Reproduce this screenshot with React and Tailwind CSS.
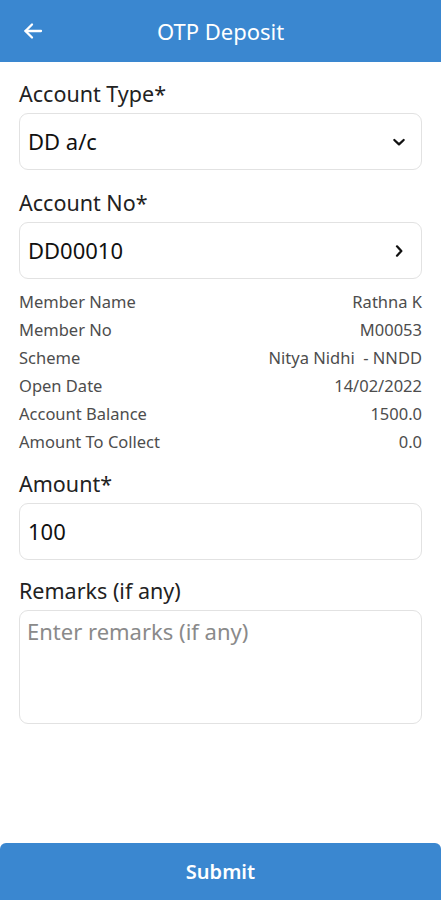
import React from "react";

const Row = ({ label, value }) => (
  <div className="flex justify-between items-center h-[28px] text-[16.5px] text-[#4d4d4d]">
    <span>{label}</span>
    <span className="whitespace-pre">{value}</span>
  </div>
);

export default function App() {
  return (
    <div className="w-[441px] h-[900px] bg-white flex flex-col" style={{ fontFamily: '"Noto Sans", "Open Sans", sans-serif' }}>
      <header className="h-[62px] bg-[#3a87d0] flex items-center relative shrink-0">
        <svg className="absolute left-[21px]" width="24" height="24" viewBox="0 0 24 24" fill="none" stroke="white" strokeWidth="2.3" strokeLinecap="round" strokeLinejoin="round">
          <path d="M20 12H4.5" />
          <path d="M11 5.5l-6.5 6.5 6.5 6.5" />
        </svg>
        <h1 className="w-full text-center text-white text-[22px]">OTP Deposit</h1>
      </header>

      <main className="flex-1 px-[19px] pt-[18px] flex flex-col">
        <label className="text-[21.5px] text-[#222] leading-[30px] h-[33px] -mt-[1px] mb-[1px]">Account Type*</label>
        <div className="h-[57px] border border-[#e2e2e2] rounded-[9px] flex items-center justify-between pl-[8px] pr-[14px]">
          <span className="text-[22px] text-[#111]">DD a/c</span>
          <svg width="16" height="16" viewBox="0 0 24 24" fill="none" stroke="#111" strokeWidth="3.4" strokeLinecap="round" strokeLinejoin="round">
            <path d="M5 9l7 6.5 7-6.5" />
          </svg>
        </div>

        <label className="text-[21.5px] text-[#222] leading-[30px] h-[33px] mt-[18px] mb-[1px]">Account No*</label>
        <div className="h-[57px] border border-[#e2e2e2] rounded-[9px] flex items-center justify-between pl-[8px] pr-[14px]">
          <span className="text-[22px] text-[#111]">DD00010</span>
          <svg width="16" height="16" viewBox="0 0 24 24" fill="none" stroke="#111" strokeWidth="3.4" strokeLinecap="round" strokeLinejoin="round">
            <path d="M9 5l6.5 7-6.5 7" />
          </svg>
        </div>

        <div className="mt-[9px] flex flex-col">
          <Row label="Member Name" value="Rathna K" />
          <Row label="Member No" value="M00053" />
          <Row label="Scheme" value="Nitya Nidhi  - NNDD" />
          <Row label="Open Date" value="14/02/2022" />
          <Row label="Account Balance" value="1500.0" />
          <Row label="Amount To Collect" value="0.0" />
        </div>

        <label className="text-[21.5px] text-[#222] leading-[30px] h-[33px] mt-[13px] mb-[1px]">Amount*</label>
        <div className="h-[57px] border border-[#e2e2e2] rounded-[9px] flex items-center pl-[8px]">
          <span className="text-[22px] text-[#111]">100</span>
        </div>

        <label className="text-[21.5px] text-[#222] leading-[30px] h-[33px] mt-[16px] mb-[1px]">Remarks (if any)</label>
        <div className="h-[114px] border border-[#e2e2e2] rounded-[9px] px-[7px] pt-[4px]">
          <span className="text-[22px] text-[#8a8a8a]">Enter remarks (if any)</span>
        </div>
      </main>

      <button className="h-[57px] shrink-0 w-full bg-[#3a87d0] rounded-t-[6px] text-white text-[20px] font-semibold">Submit</button>
    </div>
  );
}
